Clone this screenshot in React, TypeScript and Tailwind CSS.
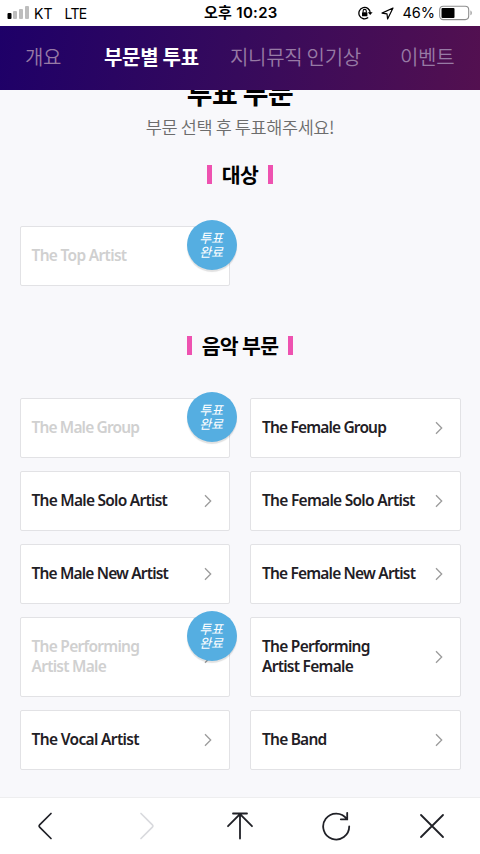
import clsx from 'clsx'

type Category = { name: string; voted?: boolean; tall?: boolean; arrow?: boolean; tracking: string }

const tabs = [
  { label: '개요', className: 'left-[25px]' },
  { label: '부문별 투표', className: 'left-[104px]', active: true },
  { label: '지니뮤직 인기상', className: 'left-[230px]' },
  { label: '이벤트', className: 'left-[400px]' },
]

const grandPrize: Category[] = [{ name: 'The Top Artist', voted: true, tracking: 'tracking-[-0.69px]' }]

const music: Category[] = [
  { name: 'The Male Group', voted: true, tracking: 'tracking-[-0.86px]' },
  { name: 'The Female Group', arrow: true, tracking: 'tracking-[-0.84px]' },
  { name: 'The Male Solo Artist', arrow: true, tracking: 'tracking-[-0.75px]' },
  { name: 'The Female Solo Artist', arrow: true, tracking: 'tracking-[-0.72px]' },
  { name: 'The Male New Artist', arrow: true, tracking: 'tracking-[-0.84px]' },
  { name: 'The Female New Artist', arrow: true, tracking: 'tracking-[-0.82px]' },
  { name: 'The Performing\nArtist Male', voted: true, arrow: true, tall: true, tracking: 'tracking-[-0.74px]' },
  { name: 'The Performing\nArtist Female', arrow: true, tall: true, tracking: 'tracking-[-0.74px]' },
  { name: 'The Vocal Artist', arrow: true, tracking: 'tracking-[-0.65px]' },
  { name: 'The Band', arrow: true, tracking: 'tracking-[-0.78px]' },
]

function StatusBar() {
  return (
    <div className="relative flex h-[26px] shrink-0 items-center justify-between bg-white pl-[7px] pr-[7px] font-['Inter','Noto_Sans_CJK_KR',sans-serif] text-[14px] text-black">
      <div className="flex items-center">
        <svg width="22" height="14" viewBox="0 0 22 14">
          <rect x="0.5" y="7" width="4" height="6" rx="1" fill="#000" />
          <rect x="6" y="5" width="4" height="8" rx="1" fill="#bdbdbd" />
          <rect x="12" y="3" width="4" height="10" rx="1" fill="#bdbdbd" />
          <rect x="18" y="0" width="4" height="13" rx="1" fill="#bdbdbd" />
        </svg>
        <span className="ml-[5px]">KT</span>
        <span className="ml-[12px] tracking-[-0.6px]">LTE</span>
      </div>
      <div className="absolute left-[204px] whitespace-nowrap text-[15px] font-semibold tracking-[0.3px]">오후 10:23</div>
      <div className="flex items-center">
        <svg width="15" height="14" viewBox="0 0 15 14" fill="none" stroke="#000" strokeWidth="1.3">
          <path d="M10.2 11.6A5.7 5.7 0 1 1 12.3 7" />
          <path d="M9.8 6.3h4.8l-2.4 2.8z" fill="#000" stroke="none" />
          <rect x="4" y="6.3" width="5.4" height="4" rx="0.5" fill="#000" stroke="none" />
          <path d="M5.1 6.5V5a1.6 1.6 0 0 1 3.2 0v1.5" strokeWidth="1.1" />
        </svg>
        <svg className="ml-[8px]" width="13" height="13" viewBox="0 0 13 13" fill="none" stroke="#000" strokeWidth="1.2" strokeLinejoin="round">
          <path d="M12 1 1 6.1l5 .7.6 5.2z" />
        </svg>
        <span className="ml-[8px] text-[14.5px]">46%</span>
        <svg className="ml-[4px]" width="34" height="16" viewBox="0 0 34 16">
          <rect x="0.7" y="1.2" width="29" height="13.4" rx="3.5" fill="none" stroke="#8e8e8e" strokeWidth="1.1" />
          <rect x="2.5" y="3" width="13" height="10" rx="1" fill="#000" />
          <path d="M31.5 5.5c1.6.6 1.6 4.2 0 4.8z" fill="#8e8e8e" />
        </svg>
      </div>
    </div>
  )
}

function SectionTitle({ children }: { children: string }) {
  return (
    <h2 className="flex h-5 items-center justify-center gap-[10px] text-[20.5px] font-bold leading-5 tracking-[-0.7px] text-black">
      <span className="h-[19px] w-[5px] bg-[#ee52b0]" />
      <span>{children}</span>
      <span className="h-[19px] w-[5px] bg-[#ee52b0]" />
    </h2>
  )
}

function CategoryCard({ name, voted, tall, arrow, tracking }: Category) {
  return (
    <div
      className={clsx(
        'relative flex items-center justify-between rounded-[2px] border border-[#e2e2e5] bg-white pl-[11px] pr-[17px]',
        tall ? 'h-[80px]' : 'h-[60px]',
      )}
    >
      <span
        className={clsx(
          "relative -top-px whitespace-pre font-['Noto_Sans',sans-serif] text-[15.5px] font-semibold leading-[20.5px]",
          tracking,
          voted ? 'text-[#d0d0d0]' : 'text-[#1f2025]',
        )}
      >
        {name}
      </span>
      {arrow && (
        <svg width="8" height="14" viewBox="0 0 8 14" fill="none" stroke="#9b9b9b" strokeWidth="1.3">
          <path d="M1 1.2 6.7 7 1 12.8" />
        </svg>
      )}
      {voted && (
        <div className="absolute -right-[8px] -top-[7px] flex size-[50px] flex-col items-center justify-center rounded-full bg-[#55aee1] pb-px pr-[2px] text-[13px] font-normal italic leading-[14px] tracking-[-0.2px] text-white shadow-[0_2px_1px_rgba(0,0,0,0.12)]">
          <span>투표</span>
          <span>완료</span>
        </div>
      )}
    </div>
  )
}

function CategoryGrid({ items }: { items: Category[] }) {
  return (
    <div className="grid grid-cols-2 gap-x-[20px] gap-y-[13px] px-[19.5px]">
      {items.map((item) => (
        <CategoryCard key={item.name} {...item} />
      ))}
    </div>
  )
}

function Toolbar() {
  return (
    <div className="grid h-[57px] shrink-0 grid-cols-5 items-center border-t border-[#eeeeef] bg-white text-[#202127]">
      <svg className="ml-[37px]" width="16" height="28" viewBox="0 0 16 28" fill="none" stroke="currentColor" strokeWidth="1.7" strokeLinecap="round" strokeLinejoin="round">
        <path d="M14 1.5 2.6 12.8q-1.1 1.2 0 2.4L14 26.5" />
      </svg>
      <svg className="ml-[43px]" width="16" height="28" viewBox="0 0 16 28" fill="none" stroke="#d9dade" strokeWidth="1.7" strokeLinecap="round" strokeLinejoin="round">
        <path d="M2 1.5 13.4 12.8q1.1 1.2 0 2.4L2 26.5" />
      </svg>
      <svg className="mx-auto" width="28" height="28" viewBox="0 0 28 28" fill="none" stroke="currentColor" strokeWidth="1.8" strokeLinecap="round">
        <path d="M7 1.5h14M14 1.5v25M2 14.2 14 2l12 12.2" />
      </svg>
      <svg className="mx-auto" width="30" height="30" viewBox="0 0 30 30" fill="none" stroke="currentColor" strokeWidth="1.8" strokeLinecap="round">
        <path d="M28.2 15.5A13 13 0 1 1 25.8 8M19.8 8.3h6.4V1.8" />
      </svg>
      <svg className="mx-auto" width="26" height="26" viewBox="0 0 26 26" fill="none" stroke="currentColor" strokeWidth="1.8" strokeLinecap="round">
        <path d="m2 2 22 22M24 2 2 24" />
      </svg>
    </div>
  )
}

export default function App() {
  return (
    <div className="flex h-[854px] w-[480px] flex-col overflow-hidden bg-[#f8f8fb] font-['Noto_Sans_CJK_KR',sans-serif]">
      <StatusBar />
      <nav className="relative h-16 shrink-0 bg-[linear-gradient(100deg,#1e0068_0%,#360a5c_50%,#531050_100%)] text-[20px] leading-[62px]">
        {tabs.map((tab) => (
          <span
            key={tab.label}
            className={clsx(
              'absolute top-0 whitespace-nowrap',
              tab.className,
              tab.active
                ? 'font-bold tracking-[-0.3px] text-white'
                : 'font-[350] tracking-[-0.3px] text-[#977aa5]',
            )}
          >
            {tab.label}
          </span>
        ))}
      </nav>
      <main className="min-h-0 flex-1 overflow-hidden">
        <h1 className="-mt-[15px] text-center text-[28px] font-bold leading-[34px] tracking-[-0.6px] text-black">투표 부문</h1>
        <p className="mt-[5px] text-center text-[17.5px] font-[350] leading-[26px] tracking-[-0.4px] text-[#6c6c6c]">부문 선택 후 투표해주세요!</p>
        <div className="mt-[24px]">
          <SectionTitle>대상</SectionTitle>
        </div>
        <div className="mt-[42px]">
          <CategoryGrid items={grandPrize} />
        </div>
        <div className="mt-[49px]">
          <SectionTitle>음악 부문</SectionTitle>
        </div>
        <div className="mt-[43px]">
          <CategoryGrid items={music} />
        </div>
      </main>
      <Toolbar />
    </div>
  )
}
